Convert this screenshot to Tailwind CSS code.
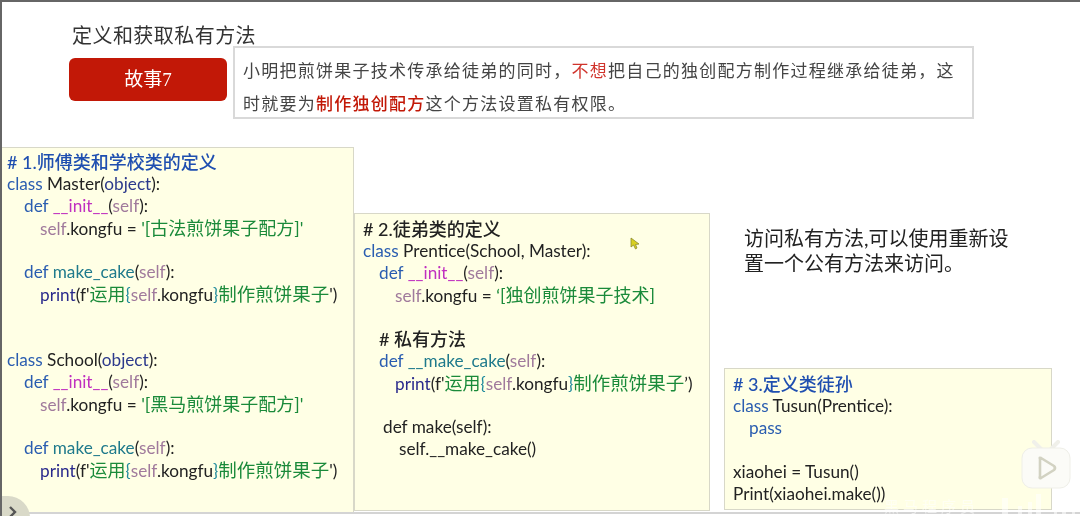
<!DOCTYPE html>
<html lang="zh">
<head>
<meta charset="UTF-8">
<title>定义和获取私有方法</title>
<script src="https://cdn.jsdelivr.net/npm/@tailwindcss/browser@4"></script>
</head>
<body class="bg-white">
<div class="relative w-[1080px] h-[516px] overflow-hidden bg-white border-t-2 border-l-2 border-[#666] font-['Lato','Noto_Sans_CJK_SC',sans-serif] blur-[0.4px]">

  <!-- slide header -->
  <h1 class="ml-[70px] pt-[19px] h-[45px] text-[20px] leading-[28px] tracking-[0.45px] font-normal text-[#333]">定义和获取私有方法</h1>
  <div class="flex items-start">
    <div class="ml-[67px] mt-[11px] w-[158px] h-[43px] rounded-md bg-[#c21807] text-white text-[19px] leading-[43px] text-center font-['Liberation_Serif','Noto_Sans_CJK_SC',serif]">故事7</div>
    <div class="ml-[6px] -mt-[1px] w-[741px] h-[73px] border-2 border-[#d9d9d9] bg-white pl-[8px] pt-[6px] text-[17px] leading-[33px] tracking-[1.25px] text-[#444] whitespace-nowrap">
      <p>小明把煎饼果子技术传承给徒弟的同时，<span class="text-[#d0342c]">不想</span>把自己的独创配方制作过程继承给徒弟，这</p>
      <p>时就要为<span class="text-[#c21807] font-medium">制作独创配方</span>这个方法设置私有权限。</p>
    </div>
  </div>

  <!-- code panels -->
  <div class="flex items-start mt-[28px] -ml-[2px] text-[17.2px] leading-[22px] text-[#222] whitespace-nowrap">

    <div class="w-[354px] h-[366px] shrink-0 bg-[#ffffe5] border border-[#d8d8c8] pl-[6px] pt-[3px]">
      <div class="h-[22px] text-[18px] text-[#1f4fb0] font-medium"># 1.师傅类和学校类的定义</div>
      <div class="h-[22px]"><span class="text-[#2a5db0]">class</span> Master(<span class="text-[#2d3a8c]">object</span>):</div>
      <div class="h-[22px] pl-[17px]"><span class="text-[#2a5db0]">def</span> <span class="text-[#c030c0]">__init__</span>(<span class="text-[#a07a9c]">self</span>):</div>
      <div class="h-[22px] pl-[33px]"><span class="text-[#a07a9c]">self</span>.kongfu = <span class="text-[18px] text-[#1a8a3a]">'[古法煎饼果子配方]'</span></div>
      <div class="h-[22px]"></div>
      <div class="h-[22px] pl-[17px]"><span class="text-[#2a5db0]">def</span> <span class="text-[#1f7a8c]">make_cake</span>(<span class="text-[#a07a9c]">self</span>):</div>
      <div class="h-[22px] pl-[33px]"><span class="text-[#2a2a8c]">print</span>(f'<span class="text-[18px] text-[#1a8a3a]">运用</span><span class="text-[#1f8a9c]">{</span><span class="text-[#a07a9c]">self</span>.kongfu<span class="text-[#1f8a9c]">}</span><span class="text-[18.5px] text-[#1a8a3a]">制作煎饼果子</span>')</div>
      <div class="h-[22px]"></div>
      <div class="h-[22px]"></div>
      <div class="h-[22px]"><span class="text-[#2a5db0]">class</span> School(<span class="text-[#2d3a8c]">object</span>):</div>
      <div class="h-[22px] pl-[17px]"><span class="text-[#2a5db0]">def</span> <span class="text-[#c030c0]">__init__</span>(<span class="text-[#a07a9c]">self</span>):</div>
      <div class="h-[22px] pl-[33px]"><span class="text-[#a07a9c]">self</span>.kongfu = <span class="text-[18px] text-[#1a8a3a]">'[黑马煎饼果子配方]'</span></div>
      <div class="h-[22px]"></div>
      <div class="h-[22px] pl-[17px]"><span class="text-[#2a5db0]">def</span> <span class="text-[#1f7a8c]">make_cake</span>(<span class="text-[#a07a9c]">self</span>):</div>
      <div class="h-[22px] pl-[33px]"><span class="text-[#2a2a8c]">print</span>(f'<span class="text-[18px] text-[#1a8a3a]">运用</span><span class="text-[#1f8a9c]">{</span><span class="text-[#a07a9c]">self</span>.kongfu<span class="text-[#1f8a9c]">}</span><span class="text-[18.5px] text-[#1a8a3a]">制作煎饼果子</span>')</div>
    </div>

    <div class="w-[356px] h-[298px] shrink-0 mt-[66px] bg-[#ffffe5] border border-[#d8d8c8] pl-[8px] pt-[4px]">
      <div class="h-[22px] text-[18px] font-medium"># 2.徒弟类的定义</div>
      <div class="h-[22px]"><span class="text-[#2a5db0]">class</span> Prentice(School, Master):</div>
      <div class="h-[22px] pl-[16px]"><span class="text-[#2a5db0]">def</span> <span class="text-[#c030c0]">__init__</span>(<span class="text-[#a07a9c]">self</span>):</div>
      <div class="h-[22px] pl-[32px]"><span class="text-[#a07a9c]">self</span>.kongfu = <span class="text-[18px] text-[#1a8a3a]">‘[独创煎饼果子技术]</span></div>
      <div class="h-[22px]"></div>
      <div class="h-[22px] pl-[16px] text-[18px] font-medium"># 私有方法</div>
      <div class="h-[22px] pl-[16px]"><span class="text-[#2a5db0]">def</span> <span class="text-[#1f7a8c]">__make_cake</span>(<span class="text-[#a07a9c]">self</span>):</div>
      <div class="h-[22px] pl-[32px]"><span class="text-[#2a2a8c]">print</span>(f'<span class="text-[18px] text-[#1a8a3a]">运用</span><span class="text-[#1f8a9c]">{</span><span class="text-[#a07a9c]">self</span>.kongfu<span class="text-[#1f8a9c]">}</span><span class="text-[18.5px] text-[#1a8a3a]">制作煎饼果子</span>’)</div>
      <div class="h-[22px]"></div>
      <div class="h-[22px] pl-[20px]">def make(self):</div>
      <div class="h-[22px] pl-[36px]">self.__make_cake()</div>
    </div>

    <div class="ml-[14px] w-[328px] shrink-0">
      <p class="ml-[20px] mt-[79px] h-[142px] w-[276px] text-[20px] leading-[25px] text-[#222] whitespace-normal">访问私有方法,可以使用重新设置一个公有方法来访问。</p>
      <div class="h-[142px] bg-[#ffffe5] border border-[#d8d8c8] pl-[8px] pt-[4px]">
        <div class="h-[22px] text-[18px] text-[#1f4fb0] font-medium"># 3.定义类徒孙</div>
        <div class="h-[22px]"><span class="text-[#2a5db0]">class</span> Tusun(Prentice):</div>
        <div class="h-[22px] pl-[16px] text-[#2a5db0]">pass</div>
        <div class="h-[22px]"></div>
        <div class="h-[22px]">xiaohei = Tusun()</div>
        <div class="h-[22px]">Print(xiaohei.make())</div>
      </div>
    </div>
  </div>

  <!-- bottom rule of the slide -->
  <div class="absolute left-0 right-0 top-[510px] h-[2px] bg-[#d4d4d4]"></div>

  <!-- mouse pointer -->
  <svg class="absolute left-[628px] top-[235px]" width="11" height="13" viewBox="0 0 11 13">
    <path d="M1 1 L1 10 L3.5 8 L5.5 12 L7 11 L5.5 7.5 L9 7 Z" fill="#d8d020" stroke="#8a8a30" stroke-width="0.8"/>
  </svg>

  <!-- player overlays -->
  <div class="absolute -left-[2px] top-[494px] w-[30px] h-[24px] rounded-tr-[22px] bg-[#d9d9c8]">
    <svg class="absolute left-[8px] top-[10px]" width="10" height="12" viewBox="0 0 10 12"><path d="M2 1 L7 6 L2 11" fill="none" stroke="#555" stroke-width="2.4"/></svg>
  </div>
  <svg class="absolute left-[1018px] top-[438px]" width="52" height="50" viewBox="0 0 52 50">
    <path d="M14 2 L21 9 M38 2 L31 9" stroke="#f0f0ea" stroke-width="4" stroke-linecap="round"/>
    <rect x="2" y="8" width="48" height="40" rx="10" fill="#fbfbf7" stroke="#efefe8" stroke-width="1"/>
    <path d="M20 19 Q19 17 21 18 L34 26 Q36 28 34 30 L21 38 Q19 39 20 36 Z" fill="none" stroke="#d2d2c2" stroke-width="2.6" stroke-linejoin="round"/>
  </svg>
  <div class="absolute left-[882px] top-[494px] text-[15px] leading-[20px] tracking-[4px] text-white/55 font-['Noto_Sans_CJK_SC',sans-serif]">黑马程序员</div>
  <svg class="absolute left-[992px] top-[488px]" width="88" height="28" viewBox="0 0 88 28" fill="#fff" fill-opacity="0.55">
    <rect x="8" y="8" width="6" height="20"/><rect x="24" y="16" width="4" height="12"/><rect x="34" y="12" width="4" height="16"/><rect x="42" y="4" width="5" height="24"/><rect x="60" y="14" width="3" height="14"/><rect x="68" y="8" width="4" height="20"/><rect x="78" y="14" width="3" height="14"/>
  </svg>
</div>
</body>
</html>
